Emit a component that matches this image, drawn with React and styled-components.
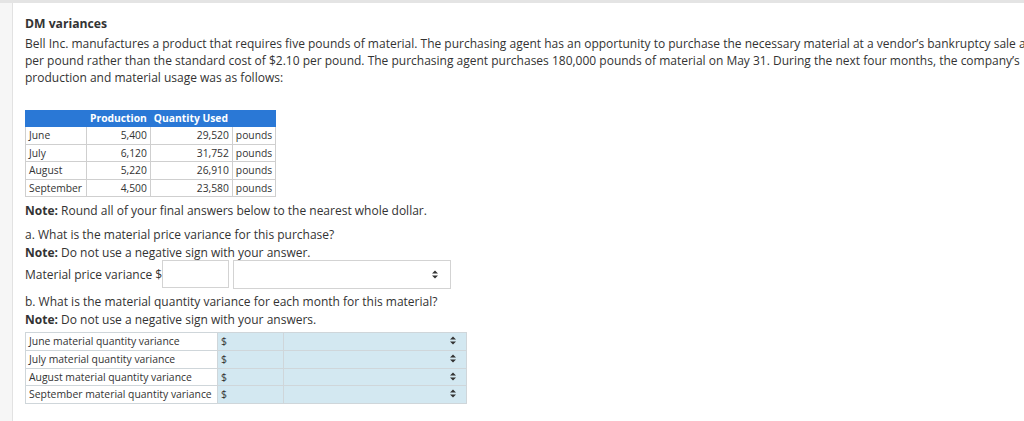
import React from "react";
import styled, { createGlobalStyle } from "styled-components";

const Global = createGlobalStyle`
  html, body { margin: 0; padding: 0; background: #f5f5f5; overflow: hidden; }
  body { font-family: "Open Sans", "Liberation Sans", sans-serif; color: #333; }
`;

const Page = styled.div`
  width: 1024px;
  height: 421px;
  overflow: hidden;
  border-top: 3px solid #e4e4e4;
  box-sizing: border-box;
  display: flex;
`;

const Gutter = styled.div`
  width: 12px;
  flex: none;
  background: #f6f6f6;
  border-right: 1px solid #e2e2e2;
`;

const Panel = styled.div`
  flex: 1;
  background: #fff;
  padding: 12px 0 0 12px;
  white-space: nowrap;
  overflow: hidden;
  font-size: 12px;
  line-height: 17px;
`;

const Title = styled.div`
  font-weight: 700;
  font-size: 12.2px;
  line-height: 17px;
  margin: 0 0 3px;
`;

const Para = styled.p`
  margin: 0;
  line-height: ${(p) => p.$lh || 17}px;
`;

const DataTable = styled.table`
  border-collapse: collapse;
  font-size: 10.3px;
  line-height: 16.5px;
  margin-top: 24px;
  td, th { border: 1px solid #cfcfcf; padding: 0 3px; }
  th {
    background: #2a78d6;
    color: #fff;
    font-weight: 700;
    border-color: #2a78d6;
    line-height: 15px;
  }
  td.num { text-align: right; }
`;

const Strong = styled.b`
  font-weight: 700;
`;

const AnswerRow = styled.div`
  display: flex;
  align-items: center;
  height: 30px;
  gap: 4px;
  margin: -3px 0 4px;
`;

const TextBox = styled.div`
  width: 67px;
  height: 28px;
  border: 1px solid #d3d3d3;
  box-sizing: border-box;
  margin-left: -4px;
`;

const SelectBox = styled.div`
  width: 218px;
  height: 29px;
  border: 1px solid #d3d3d3;
  box-sizing: border-box;
  display: flex;
  align-items: center;
  justify-content: flex-end;
  padding-right: 12px;
`;

const Arrows = () => (
  <svg width="6" height="9" viewBox="0 0 6 9">
    <path d="M0 3.6 L3 0.4 L6 3.6 Z M0 5.4 L3 8.6 L6 5.4 Z" fill="#333" />
  </svg>
);

const AnswerTable = styled.table`
  border-collapse: collapse;
  table-layout: fixed;
  width: 442px;
  font-size: 10.4px;
  line-height: 16.75px;
  margin-top: 3px;
  td { border: 1px solid #cfd6da; padding: 0 3px; overflow: hidden; }
  td.label { width: 185px; background: #fff; }
  td.cur { width: 59px; background: #d3e8f1; }
  td.sel { background: #d3e8f1; text-align: right; padding-right: 10px; }
`;

const months = [
  ["June", "5,400", "29,520"],
  ["July", "6,120", "31,752"],
  ["August", "5,220", "26,910"],
  ["September", "4,500", "23,580"],
];

export default function App() {
  return (
    <>
      <Global />
      <Page>
        <Gutter />
        <Panel>
          <Title>DM variances</Title>
          <Para>
            Bell Inc. manufactures a product that requires five pounds of material. The purchasing agent has an opportunity to purchase the necessary material at a vendor’s bankruptcy sale at $1.80
            <br />
            per pound rather than the standard cost of $2.10 per pound. The purchasing agent purchases 180,000 pounds of material on May 31. During the next four months, the company’s
            <br />
            production and material usage was as follows:
          </Para>
          <DataTable>
            <thead>
              <tr>
                <th style={{ width: 54 }}></th>
                <th>Production</th>
                <th style={{ textAlign: "left" }}>Quantity Used</th>
                <th></th>
              </tr>
            </thead>
            <tbody>
              {months.map((m) => (
                <tr key={m[0]}>
                  <td>{m[0]}</td>
                  <td className="num">{m[1]}</td>
                  <td className="num" style={{ width: 75 }}>{m[2]}</td>
                  <td>pounds</td>
                </tr>
              ))}
            </tbody>
          </DataTable>
          <Para $lh={19} style={{ marginTop: 4 }}>
            <Strong>Note:</Strong> Round all of your final answers below to the nearest whole dollar.
          </Para>
          <Para $lh={18} style={{ marginTop: 6 }}>
            a. What is the material price variance for this purchase?
          </Para>
          <Para $lh={18}>
            <Strong>Note:</Strong> Do not use a negative sign with your answer.
          </Para>
          <AnswerRow>
            <span>Material price variance $</span>
            <TextBox />
            <SelectBox>
              <Arrows />
            </SelectBox>
          </AnswerRow>
          <Para $lh={18}>
            b. What is the material quantity variance for each month for this material?
          </Para>
          <Para $lh={18}>
            <Strong>Note:</Strong> Do not use a negative sign with your answers.
          </Para>
          <AnswerTable>
            <tbody>
              {months.map((m) => (
                <tr key={m[0]}>
                  <td className="label">{m[0]} material quantity variance</td>
                  <td className="cur">$</td>
                  <td className="sel">
                    <Arrows />
                  </td>
                </tr>
              ))}
            </tbody>
          </AnswerTable>
        </Panel>
      </Page>
    </>
  );
}
